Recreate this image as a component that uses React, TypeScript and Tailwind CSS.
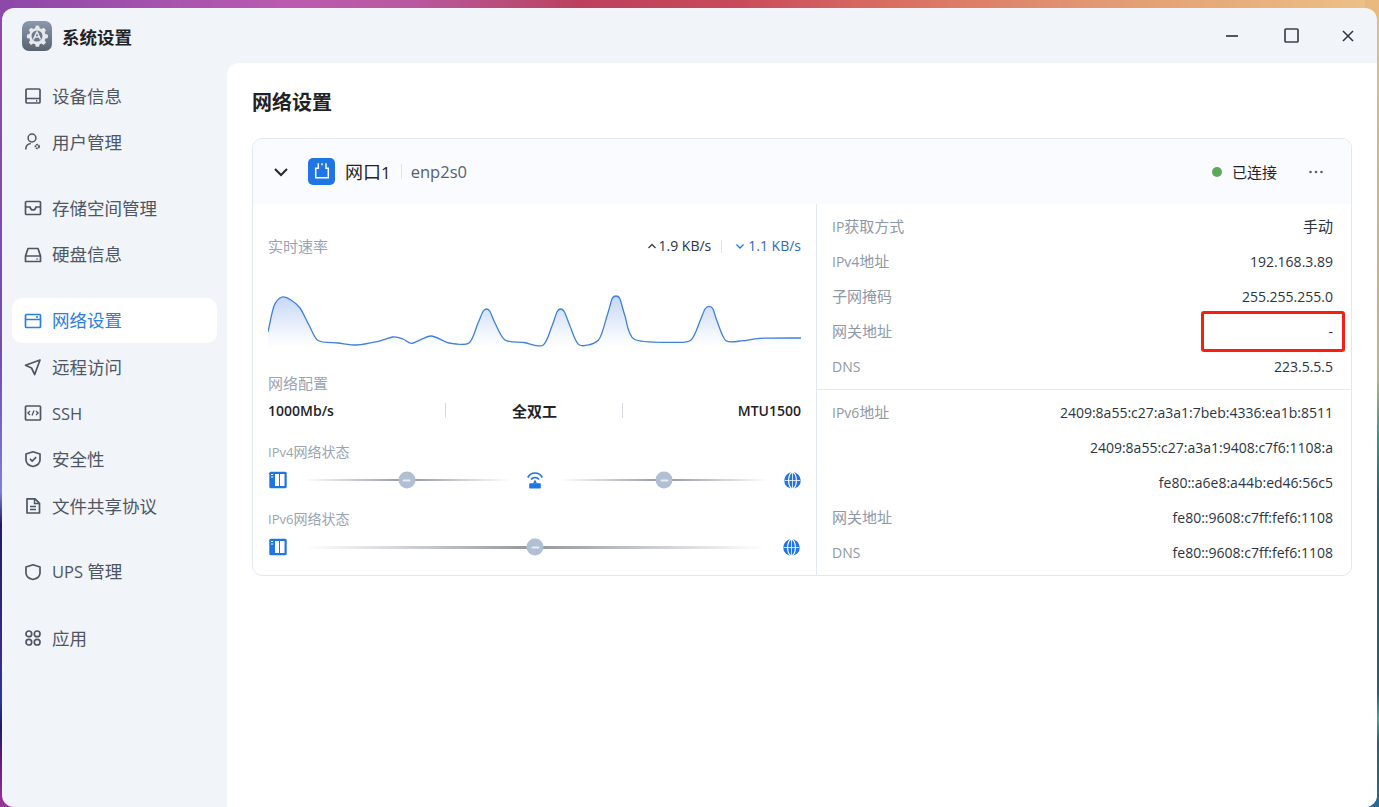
import { ReactNode } from "react";

const FONT = "font-['Open_Sans','Noto_Sans_CJK_SC',sans-serif]";

const chartPoints: [number, number][] = [
  [268, 332], [274, 306], [282, 297], [291, 300], [300, 308], [309, 325], [318, 340.5], [338, 343], [357, 345],
  [377, 341.7], [393, 337], [403, 339], [412, 343.3], [431, 336], [449, 343], [469, 343], [478, 323], [483, 311.5], [486.5, 309],
  [490, 311.5], [495, 323], [505, 340], [524, 342.5], [543, 345.3], [552, 326], [557, 312], [560.7, 309], [564.5, 312], [570, 326],
  [579.3, 345], [598.3, 340.3], [607, 316], [612, 299], [616, 296], [620, 299], [625, 316], [634.3, 339.3], [672, 342.3],
  [690.7, 340.3], [700, 321], [705, 309], [709, 306.3], [713, 309], [717, 321], [726, 340.7], [743, 340.7], [760, 338.3], [801, 338],
];

const smoothPath = (pts: [number, number][]) => {
  let d = `M${pts[0][0]} ${pts[0][1]}`;
  for (let i = 0; i < pts.length - 1; i++) {
    const p0 = pts[Math.max(i - 1, 0)];
    const p1 = pts[i];
    const p2 = pts[i + 1];
    const p3 = pts[Math.min(i + 2, pts.length - 1)];
    const c1x = p1[0] + (p2[0] - p0[0]) / 7;
    const c1y = p1[1] + (p2[1] - p0[1]) / 7;
    const c2x = p2[0] - (p3[0] - p1[0]) / 7;
    const c2y = p2[1] - (p3[1] - p1[1]) / 7;
    d += ` C${c1x.toFixed(1)} ${c1y.toFixed(1)} ${c2x.toFixed(1)} ${c2y.toFixed(1)} ${p2[0]} ${p2[1]}`;
  }
  return d;
};

const SpeedChart = () => {
  const line = smoothPath(chartPoints);
  return (
    <svg width="533" height="62" viewBox="268 290 533 62" className="block">
      <defs>
        <linearGradient id="speedFill" x1="0" y1="0" x2="0" y2="1">
          <stop offset="0%" stopColor="#c4d7f5" />
          <stop offset="70%" stopColor="#f1f5fd" />
          <stop offset="100%" stopColor="#ffffff" />
        </linearGradient>
      </defs>
      <path d={`${line} L801 348 L268 348 Z`} fill="url(#speedFill)" />
      <path d={line} fill="none" stroke="#3f7fe0" strokeWidth="1.3" />
    </svg>
  );
};

// latin runs are set a bit smaller than the CJK ones around them
const Mix = ({ text, latin }: { text: string; latin: string }) => (
  <>
    {text.split(/([\x00-\x7f]+)/).map((part, i) =>
      i % 2 === 1 ? (
        <span key={i} className={latin}>
          {part}
        </span>
      ) : (
        part
      ),
    )}
  </>
);

const Icon = ({ children }: { children: ReactNode }) => (
  <svg width="18" height="18" viewBox="0 0 18 18" fill="none" stroke="currentColor" strokeWidth="1.7" className="shrink-0">
    {children}
  </svg>
);

const menuGroups: { label: string; icon: ReactNode; active?: boolean }[][] = [
  [
    {
      label: "设备信息",
      icon: (
        <Icon>
          <rect x="2" y="2" width="14" height="14" rx="1" />
          <path d="M2 11.5h14M12 13.8h1.2" />
        </Icon>
      ),
    },
    {
      label: "用户管理",
      icon: (
        <Icon>
          <circle cx="8" cy="5" r="3.9" strokeWidth="1.5" />
          <path d="M1.8 16.500c0-3.600 2-5.600 5-5.900" strokeWidth="1.5" />
          <circle cx="13.300" cy="13.500" r="1.800" strokeWidth="1.800" strokeDasharray="1.600 0.600" />
        </Icon>
      ),
    },
  ],
  [
    {
      label: "存储空间管理",
      icon: (
        <Icon>
          <rect x="1.500" y="2.500" width="15" height="13" rx="1" />
          <path d="M1.500 8h4.500c.4 2 1.600 3 3 3s2.600-1 3-3h4.500" />
        </Icon>
      ),
    },
    {
      label: "硬盘信息",
      icon: (
        <Icon>
          <path d="M4 2.500h10l2.500 7.500v5.500h-15V10z" strokeLinejoin="round" />
          <path d="M1.500 10h15M12.500 13h1.200" />
        </Icon>
      ),
    },
  ],
  [
    {
      label: "网络设置",
      active: true,
      icon: (
        <Icon>
          <rect x="1.500" y="2.500" width="15" height="13" rx="1" />
          <path d="M1.500 7.500h15M12 5h2" />
        </Icon>
      ),
    },
    {
      label: "远程访问",
      icon: (
        <Icon>
          <path d="M16 2 1.500 7.300l6 2.700 3.200 6.500z" strokeLinejoin="round" />
        </Icon>
      ),
    },
    {
      label: "SSH",
      icon: (
        <Icon>
          <rect x="1.500" y="2" width="15" height="14" rx="1" />
          <path d="M6 7 3.900 9 6 11M12 7l2.100 2-2.100 2M10 6.500 8 11.500" strokeWidth="1.300" />
        </Icon>
      ),
    },
    {
      label: "安全性",
      icon: (
        <Icon>
          <path d="M9 1.800 16 4v6c0 3-3 5.500-7 6.500-4-1-7-3.500-7-6.500V4z" strokeLinejoin="round" />
          <path d="m6 8.800 2.200 2.200 4-3.800" />
        </Icon>
      ),
    },
    {
      label: "文件共享协议",
      icon: (
        <Icon>
          <path d="M3 1.800h8l4.500 4.500V16H3z" strokeLinejoin="round" />
          <path d="M10.500 2v4.500H15M6 9.500h6M6 12.500h6" strokeWidth="1.400" />
        </Icon>
      ),
    },
  ],
  [
    {
      label: "UPS 管理",
      icon: (
        <Icon>
          <path d="M9 1.800 16 4v6c0 3-3 5.500-7 6.500-4-1-7-3.500-7-6.500V4z" strokeLinejoin="round" />
        </Icon>
      ),
    },
  ],
  [
    {
      label: "应用",
      icon: (
        <Icon>
          <rect x="2" y="2" width="5.700" height="5.700" rx="2.800" />
          <rect x="10.300" y="2" width="5.700" height="5.700" rx="2.800" />
          <rect x="2" y="10.300" width="5.700" height="5.700" rx="2.800" />
          <rect x="10.300" y="10.300" width="5.700" height="5.700" rx="2.800" />
        </Icon>
      ),
    },
  ],
];

const ServerIcon = () => (
  <svg width="18" height="18" viewBox="0 0 18 18" className="shrink-0">
    <rect x="0.300" y="0.700" width="17.400" height="16.600" rx="1.500" fill="#1f74e6" />
    <rect x="6" y="3" width="4" height="12" fill="#fff" />
    <rect x="11" y="3" width="4.500" height="12" fill="#fff" />
    <path d="M2 3.500h2.200M2 6h2.200" stroke="#fff" strokeWidth="1.200" />
  </svg>
);

const RouterIcon = () => (
  <svg width="18" height="18" viewBox="0 0 18 18" className="shrink-0">
    <path d="M1.800 6.500C5 .5 13 .5 16.200 6.500M5 8.500c2-2.700 6-2.700 8 0" fill="none" stroke="#1f74e6" strokeWidth="1.700" />
    <path d="M9 8.500 7 12.500h4z" fill="#1f74e6" />
    <rect x="3.200" y="12.300" width="11.600" height="5.200" rx="0.800" fill="#1f74e6" />
  </svg>
);

const GlobeIcon = () => (
  <svg width="17" height="17" viewBox="0 0 17 17" className="shrink-0">
    <circle cx="8.500" cy="8.500" r="8.300" fill="#1f74e6" />
    <ellipse cx="8.500" cy="8.500" rx="3.900" ry="8.200" fill="none" stroke="#fff" strokeWidth="1.200" />
    <path d="M8.500 0.500v16M0.500 8.500h16" stroke="#fff" strokeWidth="0.800" />
  </svg>
);

const Link = ({ w, thick }: { w: string; thick?: boolean }) => (
  <div className={`relative ${w} ${thick ? "h-[3px]" : "h-[2px]"} bg-[linear-gradient(90deg,#ffffff,#92979f_50%,#ffffff)]`}>
    <div className="absolute left-1/2 top-1/2 flex h-[17px] w-[17px] -translate-x-1/2 -translate-y-1/2 items-center justify-center rounded-full bg-[#b0bfd2]">
      <div className="h-[2px] w-[8px] rounded-sm bg-[#e8edf3]" />
    </div>
  </div>
);

const infoV4 = [
  ["IP获取方式", "手动"],
  ["IPv4地址", "192.168.3.89"],
  ["子网掩码", "255.255.255.0"],
  ["网关地址", "-"],
  ["DNS", "223.5.5.5"],
];

const infoV6 = [
  ["IPv6地址", "2409:8a55:c27:a3a1:7beb:4336:ea1b:8511"],
  ["", "2409:8a55:c27:a3a1:9408:c7f6:1108:a"],
  ["", "fe80::a6e8:a44b:ed46:56c5"],
  ["网关地址", "fe80::9608:c7ff:fef6:1108"],
  ["DNS", "fe80::9608:c7ff:fef6:1108"],
];

const InfoRow = ({ label, value }: { label: string; value: string }) => (
  <div className="relative flex h-[35px] items-center justify-between pl-[15px] pr-[18px] text-[15px]">
    <span className="text-[#8e98a8]">
      <Mix text={label} latin="text-[14px]" />
    </span>
    <span className="text-[#2c3442]">
      <Mix text={value} latin="text-[14px]" />
    </span>
    {/* highlight box from the original screenshot */}
    {label === "网关地址" && value === "-" && (
      <div className="absolute right-[6px] top-[-3px] h-[41px] w-[144px] rounded-[3px] border-[3.500px] border-[#fa1e10]" />
    )}
  </div>
);

export default function App() {
  return (
    <div
      className={`h-[807px] w-[1379px] overflow-hidden pl-[2px] pr-[2px] pt-[8px] [background:linear-gradient(180deg,#8d48a8_0%,#7350a8_45%,#7f7fd0_61%,#1d1d5c_65%,#3a2a80_80%,#2a3a8a_87%,#1d1d5c_90%,#5a1f6f_94%,#9a359a_100%)_left_top/14px_100%_no-repeat,linear-gradient(180deg,#e9b97f_0%,#d4ad74_35%,#b9b878_47%,#2f9a8e_54%,#1f6388_62%,#1f5f88_86%,#3fa8a8_89%,#1f6388_92%,#2a6a90_100%)_right_top/14px_100%_no-repeat,linear-gradient(90deg,#8d48a8_0%,#ba5bb0_21%,#b9589f_30%,#b84c78_37%,#bc405e_42%,#c8495a_53%,#d96f63_65%,#e29a72_80%,#edc287_100%)] ${FONT}`}
    >
      <div className="flex h-[799px] flex-col overflow-hidden rounded-[12px] bg-[#f1f4f9]">
        {/* TITLE BAR */}
        <div className="flex h-[55px] shrink-0 items-center pl-[20px]">
          <div className="flex h-[30px] w-[30px] items-center justify-center rounded-[7px] bg-[linear-gradient(180deg,#8a99ae,#59636f)]">
            <svg width="24" height="24" viewBox="0 0 24 24">
              <path
                d="M12 1.500l2 .3.700 2.500 1.700.7 2.300-1.300 2.300 2.300-1.300 2.300.7 1.700 2.500.700v3.200l-2.500.7-.7 1.700 1.300 2.300-2.300 2.300-2.300-1.300-1.700.7-.7 2.500h-3.200l-.7-2.500-1.700-.7-2.300 1.300-2.300-2.300 1.300-2.300-.7-1.700-2.500-.7v-3.200l2.500-.7.700-1.700-1.300-2.300 2.300-2.300 2.300 1.300 1.700-.7.700-2.500z"
                fill="#e6e8eb"
              />
              <circle cx="12" cy="12" r="5.500" fill="#6d7888" />
              <path d="M12 7.500 8.500 15.500M12 7.500l3.500 8M9.500 13h5" stroke="#e6e8eb" strokeWidth="1.500" fill="none" />
            </svg>
          </div>
          <span className="ml-[10px] pt-[4px] text-[17.500px] font-bold text-[#1f2329]">系统设置</span>
          <div className="ml-auto flex items-center pr-[23px]">
            <svg width="14" height="14" viewBox="0 0 14 14" className="mr-[45px]">
              <path d="M1 7h12" stroke="#1f2329" strokeWidth="1.700" />
            </svg>
            <svg width="15" height="15" viewBox="0 0 15 15" className="mr-[43px]">
              <rect x="1" y="1" width="13" height="13" rx="1" fill="none" stroke="#3c434e" strokeWidth="1.700" />
            </svg>
            <svg width="12" height="12" viewBox="0 0 12 12">
              <path d="M1 1l10 10M11 1 1 11" stroke="#2d3440" strokeWidth="1.500" />
            </svg>
          </div>
        </div>

        <div className="flex min-h-0 flex-1">
          {/* SIDEBAR */}
          <nav className="flex w-[225px] shrink-0 flex-col gap-[21px] pl-[10px] pr-[10px] pt-[10.500px]">
            {menuGroups.map((group, i) => (
              <div key={i} className="flex flex-col gap-[1.300px]">
                {group.map((item) => (
                  <div
                    key={item.label}
                    className={`flex h-[45px] items-center gap-[10px] rounded-[10px] pl-[12px] text-[17.500px] ${
                      item.active ? "bg-white text-[#2b7de9]" : "text-[#4e5662]"
                    }`}
                  >
                    {item.icon}
                    <span>
                      <Mix text={item.label} latin="text-[16.500px]" />
                    </span>
                  </div>
                ))}
              </div>
            ))}
          </nav>

          {/* MAIN */}
          <main className="min-w-0 flex-1 rounded-tl-[12px] bg-white pl-[25px] pr-[25px]">
            <h1 className="flex h-[75px] items-center pt-[4px] text-[20px] font-bold text-[#1f2329]">网络设置</h1>

            <div className="overflow-hidden rounded-[10px] border border-[#e3e8f0]">
              <div className="flex h-[65px] items-center bg-[#fafbfe] pl-[20px] pr-[28px]">
                <svg width="16" height="16" viewBox="0 0 16 16" className="mr-[19px]">
                  <path d="M2 5l6 6 6-6" fill="none" stroke="#23282f" strokeWidth="2" />
                </svg>
                <div className="flex h-[27px] w-[27px] items-center justify-center rounded-[5px] bg-[#1f74e6]">
                  <svg width="27" height="27" viewBox="0 0 27 27">
                    <path d="M10.300 5.300v5H7.700v9.400h12.600v-9.400H18v-5M14 5.300v2" fill="none" stroke="#fff" strokeWidth="1.500" />
                  </svg>
                </div>
                <span className="ml-[10px] pt-[2px] text-[18px] text-[#1f2329]">
                  <Mix text="网口1" latin="text-[17px]" />
                </span>
                <div className="ml-[10px] h-[15px] w-px bg-[#dfe3ea]" />
                <span className="ml-[9px] pt-[2px] text-[16.500px] text-[#555f70]">enp2s0</span>
                <span className="ml-auto h-[10px] w-[10px] rounded-full bg-[#5aaa5a]" />
                <span className="ml-[10px] pt-[2px] text-[15px] text-[#1f2329]">已连接</span>
                <svg width="14" height="4" viewBox="0 0 14 4" className="ml-[32px]">
                  <circle cx="1.500" cy="2" r="1.300" fill="#5a6270" />
                  <circle cx="7" cy="2" r="1.300" fill="#5a6270" />
                  <circle cx="12.500" cy="2" r="1.300" fill="#5a6270" />
                </svg>
              </div>

              <div className="flex">
                {/* LEFT COLUMN */}
                <div className="w-[564px] shrink-0 border-r border-[#e3e8f0] pl-[15px] pr-[15px]">
                  <div className="flex h-[84px] items-start justify-between pt-[32px] text-[15px] leading-[20px]">
                    <span className="text-[#9aa3b2]">实时速率</span>
                    <div className="flex items-center text-[14px]">
                      <svg width="10" height="10" viewBox="0 0 10 10" className="mr-[2px]">
                        <path d="M1.500 7 5 3.500 8.500 7" fill="none" stroke="#3a414c" strokeWidth="1.300" />
                      </svg>
                      <span className="text-[#2c3442]">1.9 KB/s</span>
                      <div className="ml-[10px] mr-[13px] h-[13px] w-px bg-[#dfe3ea]" />
                      <svg width="10" height="10" viewBox="0 0 10 10" className="mr-[3px]">
                        <path d="M1.500 3.500 5 7 8.500 3.500" fill="none" stroke="#1f74e6" strokeWidth="1.300" />
                      </svg>
                      <span className="text-[#2f69c0]">1.1 KB/s</span>
                    </div>
                  </div>
                  <div className="mt-[2px]">
                    <SpeedChart />
                  </div>

                  <div className="mt-[21px] text-[15px] leading-[20px] text-[#9aa3b2]">网络配置</div>
                  <div className="mt-[8px] grid grid-cols-3 text-[15px] font-semibold leading-[20px] text-[#1f2329]">
                    <span className="text-[14px]">1000Mb/s</span>
                    <span className="relative text-center">
                      <span className="absolute left-[-1px] top-[2px] h-[15px] w-px bg-[#d5dae2]" />
                      全双工
                      <span className="absolute right-[0px] top-[2px] h-[15px] w-px bg-[#d5dae2]" />
                    </span>
                    <span className="text-right text-[14px]">MTU1500</span>
                  </div>

                  <div className="mt-[21px] text-[14px] leading-[20px] text-[#9aa3b2]">
                    <Mix text="IPv4网络状态" latin="text-[13px]" />
                  </div>
                  <div className="mt-[8px] flex h-[20px] items-center pl-px">
                    <ServerIcon />
                    <div className="ml-[16px]">
                      <Link w="w-[207px]" />
                    </div>
                    <div className="ml-[16px]">
                      <RouterIcon />
                    </div>
                    <div className="ml-[15px]">
                      <Link w="w-[210px]" />
                    </div>
                    <div className="ml-[15px]">
                      <GlobeIcon />
                    </div>
                  </div>

                  <div className="mt-[19px] text-[14px] leading-[20px] text-[#9aa3b2]">
                    <Mix text="IPv6网络状态" latin="text-[13px]" />
                  </div>
                  <div className="mt-[8px] flex h-[20px] items-center pl-px">
                    <ServerIcon />
                    <div className="ml-[18px]">
                      <Link w="w-[460px]" thick />
                    </div>
                    <div className="ml-[18px]">
                      <GlobeIcon />
                    </div>
                  </div>
                  <div className="h-[18px]" />
                </div>

                {/* RIGHT COLUMN */}
                <div className="min-w-0 flex-1">
                  <div className="border-b border-[#e6e9ef] pb-[5px] pt-[5px]">
                    {infoV4.map(([label, value]) => (
                      <InfoRow key={label} label={label} value={value} />
                    ))}
                  </div>
                  <div className="pt-[5px]">
                    {infoV6.map(([label, value]) => (
                      <InfoRow key={value + label} label={label} value={value} />
                    ))}
                  </div>
                </div>
              </div>
            </div>
          </main>
        </div>
      </div>
    </div>
  );
}
